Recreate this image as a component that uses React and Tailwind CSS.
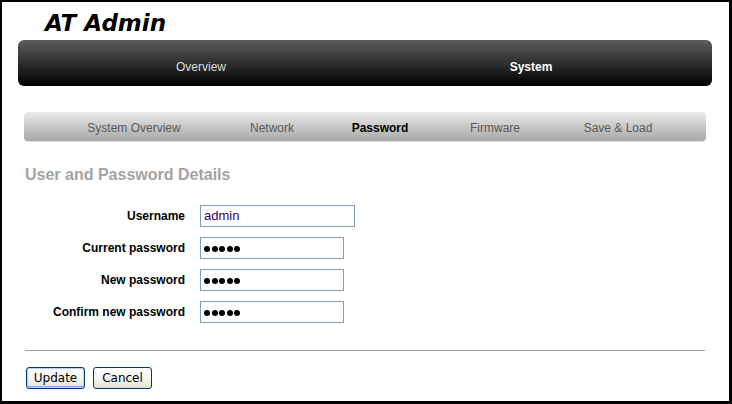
import React from 'react'

const subNav = [
  { label: 'System Overview', w: 'w-[140px]' },
  { label: 'Network', w: 'w-[136px]' },
  { label: 'Password', w: 'w-[80px]', active: true },
  { label: 'Firmware', w: 'w-[150px]' },
  { label: 'Save & Load', w: 'w-[96px]' },
]

const fields = [
  { label: 'Username', value: 'admin', w: 'w-[155px]' },
  { label: 'Current password', secret: true, w: 'w-[144px]' },
  { label: 'New password', secret: true, w: 'w-[144px]' },
  { label: 'Confirm new password', secret: true, w: 'w-[144px]' },
]

function Dots() {
  return (
    <div className="flex items-center gap-[1.5px] pt-[2px]">
      {[0, 1, 2, 3, 4].map(i => <span key={i} className="h-[6px] w-[6px] rounded-full bg-black" />)}
    </div>
  )
}

function XpButton({ children, primary }) {
  return (
    <button
      type="button"
      className={`h-[22px] w-[59px] rounded-[3px] border border-[#003c74] bg-[linear-gradient(to_bottom,#ffffff,#f4f3ee_60%,#e3e0d2)] font-['DejaVu_Sans',sans-serif] text-[12px] text-black ${primary ? 'shadow-[inset_0_0_0_1px_#b8d0f4,inset_0_-1px_0_1px_#89ade4]' : ''}`}
    >
      {children}
    </button>
  )
}

export default function App() {
  return (
    <div className="h-[404px] w-[732px] overflow-hidden border-t-2 border-l-2 border-r-[3px] border-b-[3px] border-black bg-white font-['Liberation_Sans',Arial,sans-serif]">
      <div className="h-[38px] pl-[43px] pt-[10px]">
        <h1 className="font-['DejaVu_Sans',sans-serif] text-[23px] font-bold italic leading-none text-black">AT Admin</h1>
      </div>

      <nav className="ml-[16px] flex h-[46px] w-[694px] items-center rounded-[6px] bg-[linear-gradient(to_bottom,#5c5c5c,#2a2a2a_55%,#000000)] pl-[18px] pt-[7px] text-[12px]">
        <span className="w-[330px] text-center text-[#dcdcdc]">Overview</span>
        <span className="w-[330px] text-center font-bold text-white">System</span>
      </nav>

      <div className="ml-[22px] mt-[26px] flex h-[29px] w-[682px] items-center rounded-[4px] bg-[linear-gradient(to_bottom,#ececec,#c8c8c8_50%,#a9a9a9)] pl-[40px] pt-[3px] text-[12px] shadow-[0_1px_1px_rgba(0,0,0,0.15)]">
        {subNav.map(item => (
          <span key={item.label} className={`${item.w} text-center ${item.active ? 'font-bold text-black' : 'text-[#5a5a5a]'}`}>{item.label}</span>
        ))}
      </div>

      <h2 className="ml-[23px] mt-[26px] text-[16px] font-bold leading-none text-[#a3a3a3]">User and Password Details</h2>

      <div className="mt-[22px] flex flex-col gap-[10px]">
        {fields.map(f => (
          <div key={f.label} className="flex h-[22px] items-center">
            <label className="w-[183px] text-right text-[12px] font-bold text-black">{f.label}</label>
            <div className={`ml-[15px] flex h-[22px] ${f.w} items-center border border-[#7f9db9] bg-white pl-[3px]`}>
              {f.secret ? <Dots /> : <span className="text-[13px] text-[#330066]">{f.value}</span>}
            </div>
          </div>
        ))}
      </div>

      <div className="ml-[23px] mt-[27px] h-px w-[680px] bg-[#a0a0a0]" />

      <div className="ml-[24px] mt-[16px] flex gap-[8px]">
        <XpButton primary>Update</XpButton>
        <XpButton>Cancel</XpButton>
      </div>
    </div>
  )
}
